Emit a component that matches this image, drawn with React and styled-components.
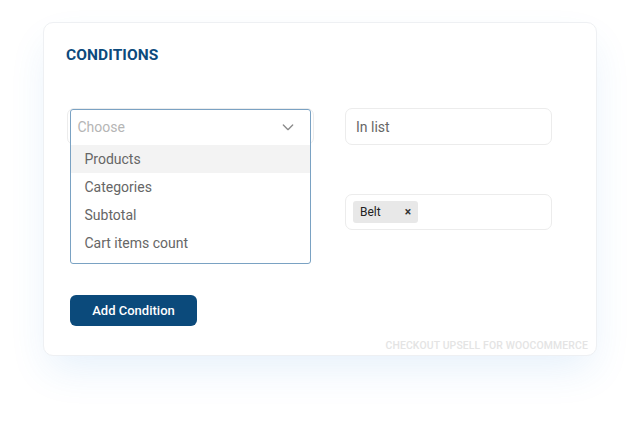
import React from 'react'
import styled, { createGlobalStyle } from 'styled-components'

const Global = createGlobalStyle`
  body {
    margin: 0;
    background: #ffffff;
    font-family: Roboto, "Liberation Sans", sans-serif;
  }
`

const Page = styled.div`
  padding: 22px 0 0 43px;
  height: 399px;
`

const Card = styled.section`
  width: 554px;
  height: 334px;
  box-sizing: border-box;
  background: #ffffff;
  border: 1px solid #eef0f3;
  border-radius: 10px;
  box-shadow: 0 18px 40px -6px rgba(40, 130, 220, 0.12);
  padding: 23px 8px 0 22px;
  display: flex;
  flex-direction: column;
`

const Title = styled.h2`
  margin: 0;
  font-size: 15.5px;
  line-height: 18px;
  font-weight: 700;
  color: #0c4a7c;
  letter-spacing: 0.1px;
`

const Grid = styled.div`
  margin-top: 44px;
  margin-left: 1px;
  display: grid;
  grid-template-columns: 247px 207px;
  column-gap: 31px;
  row-gap: 49px;
`

const Field = styled.div`
  position: relative;
  height: ${p => p.$h || 37}px;
  box-sizing: border-box;
  border: 1.5px solid #ececec;
  border-radius: 7px;
  display: flex;
  align-items: center;
  padding: 0 ${p => p.$pad || 10}px;
  font-size: 14px;
  color: #666;
`

const Dropdown = styled.div`
  position: absolute;
  top: -0.5px;
  left: 1.5px;
  width: 241px;
  box-sizing: border-box;
  background: #fff;
  border: 1px solid #7aa2c3;
  border-radius: 3px;
  padding-bottom: 6px;
  z-index: 2;
`

const DropHead = styled.div`
  height: 35px;
  display: flex;
  align-items: center;
  justify-content: space-between;
  padding: 0 14px 0 7px;
  font-size: 14px;
  color: #b5b5b5;
`

const Option = styled.div`
  height: 28px;
  display: flex;
  align-items: center;
  padding-left: 14px;
  font-size: 14px;
  color: #666;
  background: ${p => (p.$active ? '#f3f3f3' : 'transparent')};
`

const Tag = styled.span`
  display: inline-flex;
  align-items: center;
  justify-content: space-between;
  width: 65px;
  height: 22px;
  box-sizing: border-box;
  padding: 0 7px 0 7px;
  background: #e8e8e8;
  border-radius: 3px;
  font-size: 12px;
  color: #222;
`

const Close = styled.span`
  font-size: 12px;
  font-weight: 700;
  color: #333;
`

const Button = styled.button`
  margin-top: 65px;
  margin-left: 4px;
  width: 127px;
  height: 31px;
  border: none;
  border-radius: 6px;
  background: #0b4a7b;
  color: #fff;
  font-family: Roboto, "Liberation Sans", sans-serif;
  font-size: 13px;
  font-weight: 500;
  cursor: pointer;
`

const Footer = styled.div`
  margin-top: 13px;
  text-align: right;
  font-size: 10.4px;
  font-weight: 500;
  color: #e4e4e4;
  letter-spacing: 0.15px;
`

const Chevron = () => (
  <svg width="16" height="16" viewBox="0 0 24 24" fill="none" stroke="#8a8a8a" strokeWidth="2" strokeLinecap="round" strokeLinejoin="round">
    <path d="m5 9 7 7 7-7" />
  </svg>
)

const options = ['Products', 'Categories', 'Subtotal', 'Cart items count']

const App = () => {
  return (
    <>
      <Global />
      <Page>
        <Card>
          <Title>CONDITIONS</Title>
          <Grid>
            <Field>
              <Dropdown>
                <DropHead>
                  Choose <Chevron />
                </DropHead>
                {options.map((o, i) => (
                  <Option key={o} $active={i === 0}>{o}</Option>
                ))}
              </Dropdown>
            </Field>
            <Field>In list</Field>
            <div />
            <Field $h={36} $pad={7}>
              <Tag>Belt <Close>×</Close></Tag>
            </Field>
          </Grid>
          <Button>Add Condition</Button>
          <Footer>CHECKOUT UPSELL FOR WOOCOMMERCE</Footer>
        </Card>
      </Page>
    </>
  )
}

export default App
